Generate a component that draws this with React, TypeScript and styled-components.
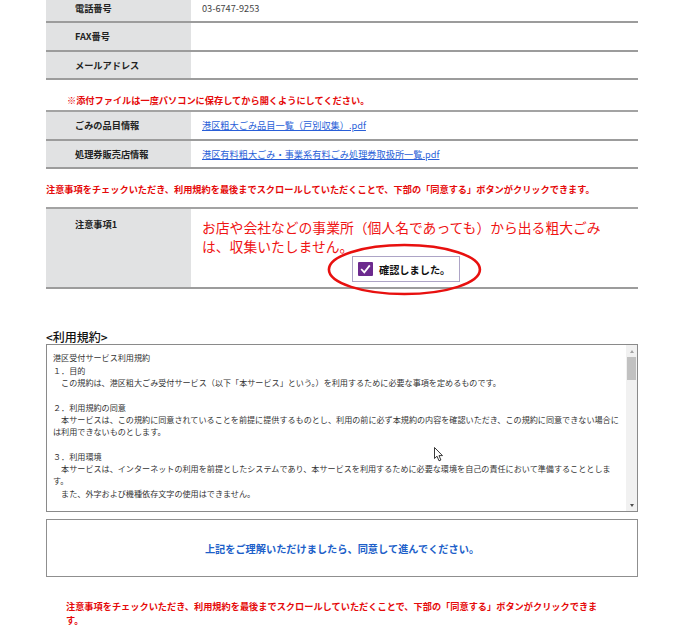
import React from "react";
import styled, { createGlobalStyle } from "styled-components";

const GlobalStyle = createGlobalStyle`
  body {
    margin: 0;
    background: #fff;
    font-family: "Noto Sans CJK JP", "Noto Sans", sans-serif;
  }
`;

const Page = styled.div`
  width: 592px;
  margin-left: 46px;
  padding-bottom: 20px;
`;

const InfoTable = styled.div<{ $top?: boolean; $shift?: number }>`
  border-top: ${(p) => (p.$top ? "2px solid #a3a3a3" : "none")};
  margin-top: ${(p) => p.$shift || 0}px;
`;

const Row = styled.div`
  display: grid;
  grid-template-columns: 145px 1fr;
  border-bottom: 2px solid #9c9c9c;
`;

const Label = styled.div<{ $padTop?: number }>`
  background: #e1e2e3;
  padding: ${(p) => p.$padTop ?? 6}px 0 6px 29px;
  font-size: 9.2px;
  line-height: 14.3px;
  font-weight: bold;
  color: #222;
`;

const Value = styled.div`
  padding: 6px 11px;
  font-size: 9.2px;
  line-height: 14.3px;
  color: #444;
`;

const FileLink = styled.a`
  color: #2a5fd8;
  text-decoration: underline;
`;

const Notice = styled.p<{ $indent?: number; $mt: number; $mb?: number; $width?: number }>`
  margin: ${(p) => p.$mt}px 0 ${(p) => p.$mb || 0}px;
  padding-left: ${(p) => p.$indent || 0}px;
  width: ${(p) => (p.$width ? `${p.$width}px` : "auto")};
  color: #e50a0a;
  font-size: 9.2px;
  line-height: 13.5px;
  font-weight: bold;
`;

const CautionCell = styled.div`
  padding: 9px 28px 5px 11px;
`;

const CautionText = styled.div`
  color: #ef1414;
  font-size: 13.8px;
  line-height: 19px;
`;

const ConfirmWrap = styled.div`
  position: relative;
  display: flex;
  justify-content: center;
`;

const ConfirmBox = styled.label`
  width: 108px;
  height: 26px;
  box-sizing: border-box;
  border: 1px solid #ada4c6;
  background: #fff;
  display: flex;
  align-items: center;
  gap: 6px;
  padding-left: 5px;
  font-size: 10.2px;
  font-weight: bold;
  color: #111;
`;

const Ring = styled.svg`
  position: absolute;
  left: 50%;
  top: 50%;
  width: 158px;
  height: 54px;
  transform: translate(-51%, -49%);
  pointer-events: none;
  overflow: visible;
`;

const Heading = styled.h3`
  margin: 41px 0 0;
  font-size: 12px;
  line-height: 14px;
  font-weight: 500;
  color: #111;
`;

const TermsBox = styled.div`
  position: relative;
  height: 168px;
  box-sizing: border-box;
  border: 1px solid #8a8a8a;
  display: flex;
`;

const TermsText = styled.div`
  flex: 1;
  padding: 7px 4px 0 6px;
  overflow: hidden;
  font-size: 8.1px;
  line-height: 12.3px;
  color: #333;
`;

const TermsLine = styled.div`
  min-height: 12.3px;
`;

const ScrollTrack = styled.div`
  width: 11px;
  background: #f1f1f1;
  display: flex;
  flex-direction: column;
  align-items: center;
`;

const ScrollArrow = styled.div<{ $down?: boolean }>`
  height: 12px;
  width: 100%;
  display: flex;
  align-items: center;
  justify-content: center;
  margin-top: ${(p) => (p.$down ? "auto" : "0")};
  &::after {
    content: "";
    border-left: 2.5px solid transparent;
    border-right: 2.5px solid transparent;
    ${(p) => (p.$down ? "border-top: 3px solid #505050;" : "border-bottom: 3px solid #a3a3a3;")}
  }
`;

const ScrollThumb = styled.div`
  width: 9px;
  height: 23px;
  background: #c1c1c1;
`;

const Cursor = styled.svg`
  position: absolute;
  left: 387px;
  top: 102px;
  width: 10px;
  height: 15px;
`;

const AgreeBox = styled.div`
  margin-top: 7px;
  height: 58px;
  box-sizing: border-box;
  border: 1px solid #8f8f8f;
  display: flex;
  align-items: center;
  justify-content: center;
  color: #1d5fc9;
  font-size: 10.2px;
  font-weight: bold;
`;

const contactRows = [
  { label: "電話番号", value: "03-6747-9253" },
  { label: "FAX番号", value: "" },
  { label: "メールアドレス", value: "" },
];

const fileRows = [
  { label: "ごみの品目情報", file: "港区粗大ごみ品目一覧（戸別収集）.pdf" },
  { label: "処理券販売店情報", file: "港区有料粗大ごみ・事業系有料ごみ処理券取扱所一覧.pdf" },
];

// only the part of the terms visible in the scroll box
const terms = [
  "港区受付サービス利用規約",
  "１．目的",
  "　この規約は、港区粗大ごみ受付サービス（以下「本サービス」という。）を利用するために必要な事項を定めるものです。",
  "",
  "２．利用規約の同意",
  "　本サービスは、この規約に同意されていることを前提に提供するものとし、利用の前に必ず本規約の内容を確認いただき、この規約に同意できない場合には利用できないものとします。",
  "",
  "３．利用環境",
  "　本サービスは、インターネットの利用を前提としたシステムであり、本サービスを利用するために必要な環境を自己の責任において準備することとします。",
  "　また、外字および機種依存文字の使用はできません。",
];

const notice = "注意事項をチェックいただき、利用規約を最後までスクロールしていただくことで、下部の「同意する」ボタンがクリックできます。";

const App = () => {
  return (
    <Page>
      <GlobalStyle />
      <InfoTable $shift={-5}>
        {contactRows.map((r) => (
          <Row key={r.label}>
            <Label>{r.label}</Label>
            <Value>{r.value}</Value>
          </Row>
        ))}
      </InfoTable>

      <Notice $indent={21} $mt={14} $mb={3}>
        ※添付ファイルは一度パソコンに保存してから開くようにしてください。
      </Notice>

      <InfoTable $top>
        {fileRows.map((r) => (
          <Row key={r.label}>
            <Label>{r.label}</Label>
            <Value>
              <FileLink href="#">{r.file}</FileLink>
            </Value>
          </Row>
        ))}
      </InfoTable>

      <Notice $mt={14} $mb={11}>
        {notice}
      </Notice>

      <InfoTable $top>
        <Row>
          <Label $padTop={8}>注意事項1</Label>
          <CautionCell>
            <CautionText>
              お店や会社などの事業所（個人名であっても）から出る粗大ごみは、収集いたしません。
            </CautionText>
            <ConfirmWrap>
              <ConfirmBox>
                <svg width="15" height="14" viewBox="0 0 15 14">
                  <rect x="0" y="0" width="15" height="14" rx="1" fill="#6c2a8e" />
                  <path d="M3.2 7 L6.3 10.4 L11.8 3.4" fill="none" stroke="#fff" strokeWidth="1.8" />
                </svg>
                確認しました。
              </ConfirmBox>
              <Ring viewBox="0 0 158 54">
                <ellipse cx="79" cy="27" rx="75.5" ry="24.5" fill="none" stroke="#e8100f" strokeWidth="2.6" />
              </Ring>
            </ConfirmWrap>
          </CautionCell>
        </Row>
      </InfoTable>

      <Heading>&lt;利用規約&gt;</Heading>
      <TermsBox>
        <TermsText>
          {terms.map((t, i) => (
            <TermsLine key={i}>{t}</TermsLine>
          ))}
        </TermsText>
        <ScrollTrack>
          <ScrollArrow />
          <ScrollThumb />
          <ScrollArrow $down />
        </ScrollTrack>
        <Cursor viewBox="0 0 10 15">
          <path
            d="M0.5 0.5 L0.5 11.5 L3 9.2 L5 13.8 L6.9 13 L5 8.6 L8.5 8.6 Z"
            fill="#fff"
            stroke="#222"
            strokeWidth="0.9"
            strokeLinejoin="round"
          />
        </Cursor>
      </TermsBox>

      <AgreeBox>上記をご理解いただけましたら、同意して進んでください。</AgreeBox>

      <Notice $indent={20} $mt={23} $width={545}>
        {notice}
      </Notice>
    </Page>
  );
};

export default App;
